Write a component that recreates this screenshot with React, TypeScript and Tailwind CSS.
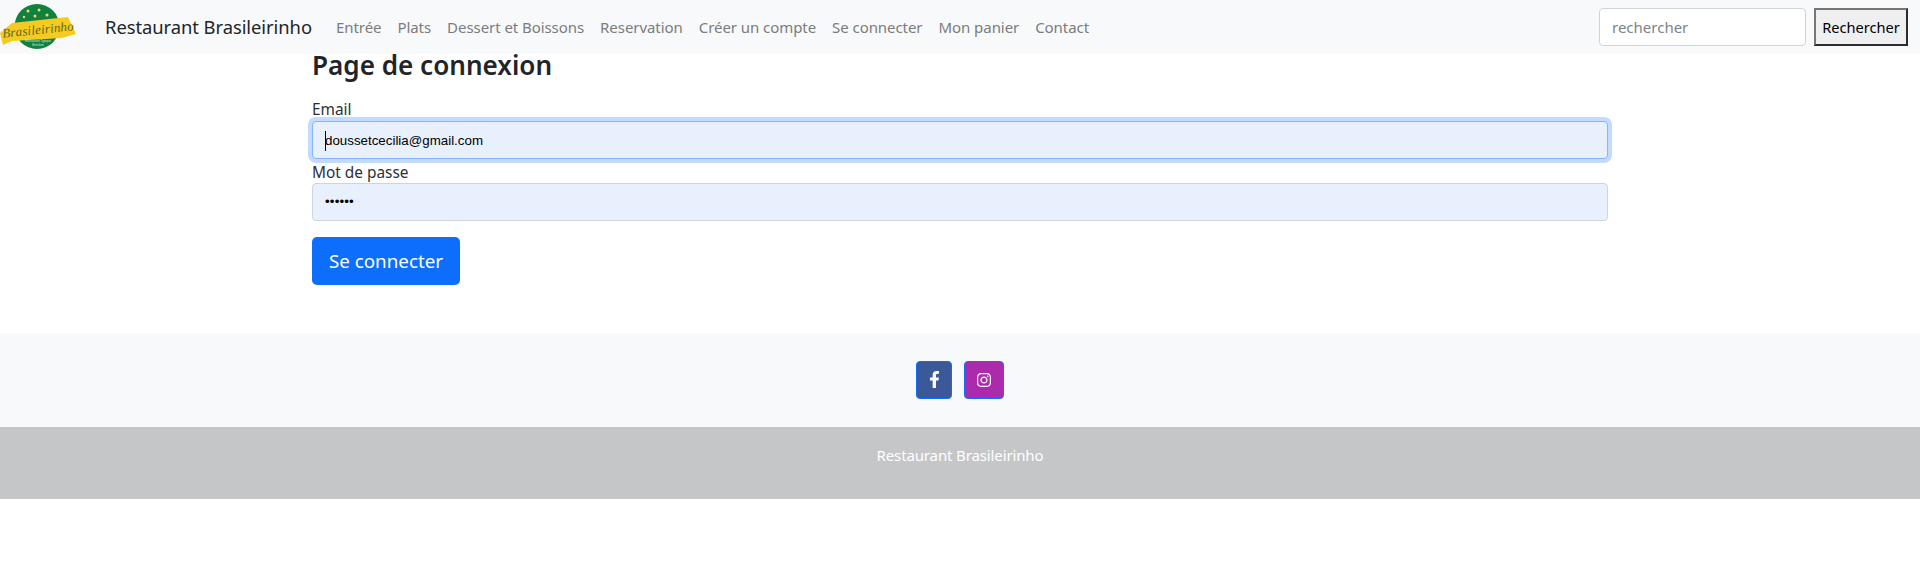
import { FaFacebookF, FaInstagram } from "react-icons/fa";

const links = ["Entrée", "Plats", "Dessert et Boissons", "Reservation", "Créer un compte", "Se connecter", "Mon panier", "Contact"];

function Logo() {
  return (
    <svg width="76" height="54" viewBox="0 0 76 54" className="shrink-0">
      <circle cx="37" cy="26.5" r="22.5" fill="#12813f" />
      <circle cx="28" cy="11" r="1.5" fill="#e8d77a" />
      <circle cx="39" cy="10" r="1.5" fill="#e8d77a" />
      <circle cx="35" cy="16" r="1.5" fill="#e8d77a" />
      <circle cx="47" cy="15" r="1.5" fill="#e8d77a" />
      <circle cx="24" cy="17" r="1.2" fill="#e8d77a" />
      <polygon points="0,33 12,23 68,17 76,34 62,38 12,41 3,45" fill="#f6cb1f" />
      <text x="38" y="34" textAnchor="middle" transform="rotate(-6 38 30)" fontFamily="'Liberation Serif', serif" fontStyle="italic" fontSize="13" letterSpacing="0.2" fill="#5c6420">Brasileirinho</text>
      <text x="38" y="41.5" textAnchor="middle" fontFamily="'Liberation Sans', sans-serif" fontSize="3" fill="#d6ead9">Restaurant Typique</text>
      <text x="38" y="45.5" textAnchor="middle" fontFamily="'Liberation Sans', sans-serif" fontSize="3" fill="#d6ead9">Brésilien</text>
    </svg>
  );
}

export default function App() {
  return (
    <div className="bg-white text-[#212529] font-['Noto_Sans',sans-serif] text-[15.4px] leading-[24px] min-h-[572px]">
      <nav className="h-[54px] bg-[#f8f9fa] flex items-center pr-3">
        <Logo />
        <a className="ml-[29px] text-[18.4px] tracking-[-0.06px] text-[#212529] leading-[30px] mr-3">Restaurant Brasileirinho</a>
        <ul className="flex items-center ml-1 text-[15px] tracking-[-0.06px]">
          {links.map((l) => (
            <li key={l} className="px-2 text-[#7a7c7e]">{l}</li>
          ))}
        </ul>
        <form className="ml-auto flex items-center gap-2">
          <div className="w-[207px] h-[38px] bg-white border border-[#ced4da] rounded px-3 flex items-center text-[#7c838a] text-[15px]">rechercher</div>
          <button type="button" className="w-[94px] h-[38px] bg-[#efefef] border-2 border-t-[#767676] border-l-[#767676] border-r-[#2b2b2b] border-b-[#2b2b2b] text-black text-[14.6px] flex items-center justify-center font-['Noto_Sans',sans-serif]">Rechercher</button>
        </form>
      </nav>

      <main className="w-[1296px] mx-auto h-[279px]">
        <h2 className="text-[26.1px] leading-[22px] font-semibold mb-[24px]">Page de connexion</h2>
        <label className="block leading-[20px] mb-[1px] text-[#2b3035]">Email</label>
        <div className="h-[38px] bg-[#e8f0fe] border border-[#86b7fe] rounded ring-4 ring-[#c2dbfe] px-3 pt-[1px] flex items-center text-black text-[13.33px] font-['Liberation_Sans',sans-serif] relative">
          <span className="absolute left-[12px] top-[9px] w-px h-[20px] bg-black" />
          doussetcecilia@gmail.com
        </div>
        <label className="block leading-[20px] mt-[4px] text-[#2b3035]">Mot de passe</label>
        <div className="h-[38px] bg-[#e8f0fe] border border-[#ced4da] rounded px-3 flex items-center text-black text-[13.33px] font-['Liberation_Sans',sans-serif] tracking-[0.15px]">••••••</div>
        <button type="button" className="mt-4 w-[148px] h-[48px] bg-[#0d6efd] text-white text-[18.8px] rounded-[5px] flex items-center justify-center">Se connecter</button>
      </main>

      <footer>
        <div className="h-[94px] bg-[#f8f9fa] flex items-center justify-center gap-3 pb-[1px]">
          <a className="w-[36px] h-[38px] bg-[#3b5998] border border-[#0d6efd] rounded flex items-center justify-center text-white text-[17px]"><FaFacebookF /></a>
          <a className="w-[40px] h-[38px] bg-[#ac2bac] border border-[#0d6efd] rounded flex items-center justify-center text-white text-[16px]"><FaInstagram /></a>
        </div>
        <div className="h-[72px] bg-[#c5c6c8] text-white text-center pt-[16px] text-[15px] tracking-[-0.13px]">Restaurant Brasileirinho</div>
      </footer>
    </div>
  );
}
